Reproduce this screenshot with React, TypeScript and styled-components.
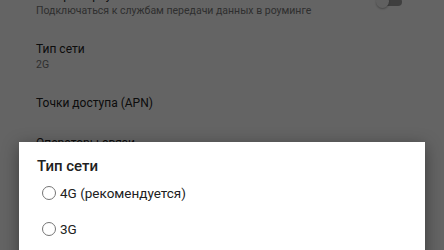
import React from 'react';
import styled, { createGlobalStyle } from 'styled-components';

const GlobalStyle = createGlobalStyle`
  html, body {
    margin: 0;
    padding: 0;
    background: #fafafa;
  }
  body {
    font-family: Roboto, "Noto Sans", "Liberation Sans", sans-serif;
  }
`;

const settings = [
  { title: 'Интернет-роуминг', summary: 'Подключаться к службам передачи данных в роуминге', toggle: true },
  { title: 'Тип сети', summary: '2G' },
  { title: 'Точки доступа (APN)' },
  { title: 'Операторы связи' },
];

const options = ['4G (рекомендуется)', '3G'];

const App = () => {
  return (
    <>
      <GlobalStyle />
      <Screen>
        <List>
          {settings.map((item) => (
            <Item key={item.title} twoLine={!!item.summary}>
              <ItemText>
                <ItemTitle>{item.title}</ItemTitle>
                {item.summary && <ItemSummary>{item.summary}</ItemSummary>}
              </ItemText>
              {item.toggle && (
                <Switch>
                  <Track />
                  <Thumb />
                </Switch>
              )}
            </Item>
          ))}
        </List>
        <Scrim />
        <Dialog>
          <DialogTitle>Тип сети</DialogTitle>
          {options.map((label) => (
            <Option key={label}>
              <Radio />
              <OptionLabel>{label}</OptionLabel>
            </Option>
          ))}
        </Dialog>
      </Screen>
    </>
  );
};

export default App;

const Screen = styled.div`
  position: relative;
  width: 444px;
  height: 250px;
  overflow: hidden;
  background: #fafafa;
`;

// list is scrolled, first item partly off screen
const List = styled.div`
  display: flex;
  flex-direction: column;
  margin-top: -25px;
`;

const Item = styled.div<{ twoLine: boolean }>`
  display: flex;
  align-items: center;
  height: ${(p) => (p.twoLine ? '54px' : '40px')};
  padding: 0 42px 0 36px;
`;

const ItemText = styled.div`
  flex: 1;
  display: flex;
  flex-direction: column;
  gap: 3px;
`;

const ItemTitle = styled.div`
  font-size: 12px;
  line-height: 14px;
  color: #212121;
`;

const ItemSummary = styled.div`
  font-size: 10.5px;
  line-height: 12px;
  color: #757575;
`;

const Switch = styled.div`
  position: relative;
  width: 26px;
  height: 14px;
`;

const Track = styled.div`
  position: absolute;
  left: 3px;
  right: 0;
  top: 3px;
  height: 8px;
  border-radius: 4px;
  background: #9e9e9e;
`;

const Thumb = styled.div`
  position: absolute;
  left: 0;
  top: 0;
  width: 13px;
  height: 13px;
  border-radius: 50%;
  background: #f1f1f1;
  box-shadow: 0 1px 2px rgba(0, 0, 0, 0.3);
`;

const Scrim = styled.div`
  position: absolute;
  inset: 0;
  background: rgba(0, 0, 0, 0.6);
`;

const Dialog = styled.div`
  position: absolute;
  left: 19px;
  right: 19px;
  top: 142px;
  height: 160px;
  background: #fff;
  box-shadow: 0 4px 16px rgba(0, 0, 0, 0.4);
  padding: 15px 18px 0;
  display: flex;
  flex-direction: column;
  box-sizing: border-box;
`;

const DialogTitle = styled.div`
  font-size: 15px;
  font-weight: 500;
  line-height: 18px;
  color: #212121;
`;

const Option = styled.div`
  display: flex;
  align-items: center;
  height: 36px;
  padding-left: 4.5px;
  gap: 4.5px;
`;

const Radio = styled.div`
  width: 12px;
  height: 12px;
  border: 1.5px solid #757575;
  border-radius: 50%;
`;

const OptionLabel = styled.div`
  font-size: 13.5px;
  color: #212121;
`;
